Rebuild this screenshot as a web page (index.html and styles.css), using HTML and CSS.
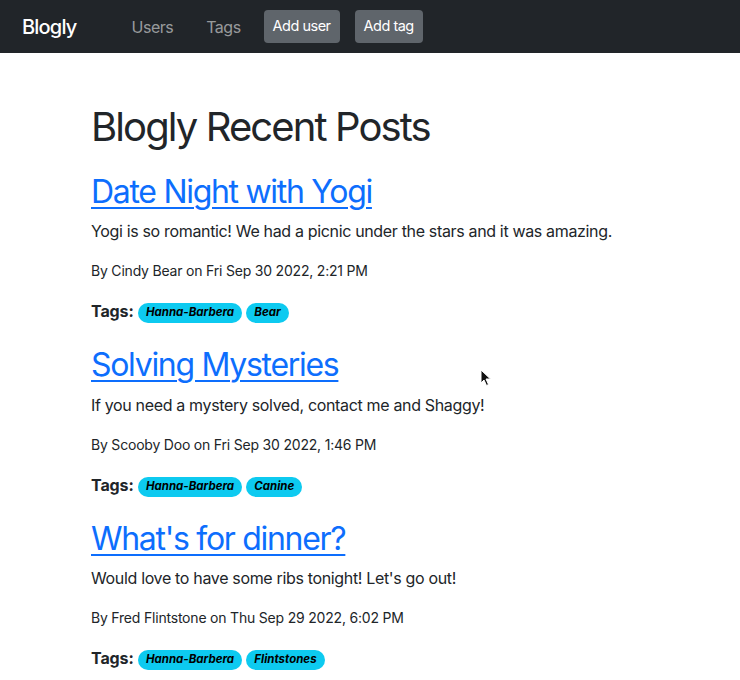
FILE: index.html
```html
<!DOCTYPE html>
<html lang="en">
<head>
    <meta charset="UTF-8">
    <meta name="viewport" content="width=device-width, initial-scale=1.0">
    <title>Blogly</title>
    <link rel="stylesheet" href="styles.css">
</head>
<body>
    <nav class="navbar">
        <a class="brand" href="#">Blogly</a>
        <div class="nav-links">
            <a class="nav-link" href="#">Users</a>
            <a class="nav-link" href="#">Tags</a>
            <a class="btn" href="#">Add user</a>
            <a class="btn" href="#">Add tag</a>
        </div>
    </nav>

    <div class="container">
        <h1>Blogly Recent Posts</h1>

        <div class="post">
            <h2><a href="#">Date Night with Yogi</a></h2>
            <p>Yogi is so romantic! We had a picnic under the stars and it was amazing.</p>
            <p class="meta">By Cindy Bear on Fri Sep 30 2022, 2:21 PM</p>
            <p class="tags"><b>Tags:</b>
                <span class="badge"><i>Hanna-Barbera</i></span>
                <span class="badge"><i>Bear</i></span>
            </p>
        </div>

        <div class="post">
            <h2><a href="#">Solving Mysteries</a></h2>
            <p>If you need a mystery solved, contact me and Shaggy!</p>
            <p class="meta">By Scooby Doo on Fri Sep 30 2022, 1:46 PM</p>
            <p class="tags"><b>Tags:</b>
                <span class="badge"><i>Hanna-Barbera</i></span>
                <span class="badge"><i>Canine</i></span>
            </p>
        </div>

        <div class="post">
            <h2><a href="#">What's for dinner?</a></h2>
            <p>Would love to have some ribs tonight! Let's go out!</p>
            <p class="meta">By Fred Flintstone on Thu Sep 29 2022, 6:02 PM</p>
            <p class="tags"><b>Tags:</b>
                <span class="badge"><i>Hanna-Barbera</i></span>
                <span class="badge"><i>Flintstones</i></span>
            </p>
        </div>
    </div>

    <svg class="cursor" width="12" height="18" viewBox="0 0 12 18">
        <path d="M1 1 L1 14 L4 11 L6.5 16.5 L8.5 15.5 L6 10 L10.5 10 Z" fill="#111" stroke="#fff" stroke-width="1"/>
    </svg>
</body>
</html>
```

FILE: styles.css
```css
:root {
    --dark: #212529;
    --link: #0d6efd;
    --info: #0dcaf0;
    --secondary: #5f656b;
}

* {
    margin: 0;
    padding: 0;
    box-sizing: border-box;
}

body {
    font-family: Inter, 'Liberation Sans', sans-serif;
    font-size: 16px;
    line-height: 1.5;
    letter-spacing: -0.34px;
    color: var(--dark);
    background-color: #fff;
}

.navbar {
    display: flex;
    align-items: center;
    height: 53px;
    padding: 0 22px;
    background-color: var(--dark);
}

.brand {
    font-size: 20px;
    font-weight: 500;
    color: #fff;
    text-decoration: none;
    letter-spacing: -0.8px;
    margin-right: 47px;
}

.nav-links {
    display: flex;
    align-items: center;
    gap: 15px;
}

.nav-link {
    color: rgba(255, 255, 255, 0.55);
    text-decoration: none;
    padding: 0 8px;
    letter-spacing: -0.5px;
}

.nav-link + .nav-link {
    margin-left: 2px;
}

.btn {
    display: inline-block;
    padding: 5px 9px 6px;
    font-size: 14.5px;
    color: #fff;
    text-decoration: none;
    background-color: var(--secondary);
    border-radius: 4px;
    letter-spacing: -0.5px;
}

.btn:first-of-type {
    margin-left: -5px;
}

.container {
    padding: 50px 91px 0;
}

h1 {
    font-size: 40px;
    font-weight: 400;
    line-height: 1.2;
    margin-bottom: 22px;
    letter-spacing: -1.9px;
}

.post {
    padding-bottom: 7px;
}

h2 {
    font-size: 32px;
    font-weight: 400;
    line-height: 1.2;
    margin-bottom: 8px;
    letter-spacing: -1.3px;
}

h2 a {
    color: var(--link);
    text-decoration: underline;
    text-underline-offset: 4px;
    text-decoration-thickness: 2px;
}

p {
    margin-bottom: 16px;
}

.meta {
    font-size: 14px;
    line-height: 24px;
    letter-spacing: -0.2px;
}

.tags b {
    font-size: 16px;
    font-weight: 700;
    letter-spacing: -0.1px;
}

.badge {
    display: inline-block;
    padding: 3px 8px;
    font-size: 11.5px;
    font-weight: 700;
    line-height: 1.2;
    letter-spacing: 0;
    color: #000;
    background-color: var(--info);
    border-radius: 10px;
    vertical-align: 1px;
}

.cursor {
    position: absolute;
    left: 480px;
    top: 369px;
}
```
